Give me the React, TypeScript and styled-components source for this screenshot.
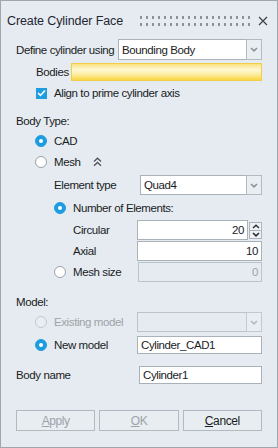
import React from 'react';
import styled, { createGlobalStyle } from 'styled-components';

const GlobalStyle = createGlobalStyle`
    body {
        margin: 0;
        font-family: "Liberation Sans", Arial, sans-serif;
        background: #e5ebf0;
    }
`;

const Dialog = styled.div`
    width: 278px;
    height: 448px;
    box-sizing: border-box;
    border: 1px solid #9ea6ae;
    background: #e5ebf0;
    display: flex;
    flex-direction: column;
    color: #1a1c24;
    font-size: 11.5px;
    letter-spacing: -0.4px;
`;

const TitleBar = styled.div`
    height: 36px;
    box-sizing: border-box;
    padding: 3px 9px 0 6px;
    display: flex;
    align-items: center;
`;

const Title = styled.span`
    font-size: 12.5px;
    letter-spacing: -0.1px;
    color: #1f2633;
    flex: none;
`;

const Grip = styled.div`
    flex: 1;
    height: 14px;
    margin: 0 6px 0 15px;
    background-image: radial-gradient(circle, #899098 1.1px, transparent 1.5px);
    background-size: 6px 7px;
`;

const Content = styled.div`
    padding: 0 15px;
    display: flex;
    flex-direction: column;
`;

const Row = styled.div<{ $h: number; $mt: number; $indent?: number }>`
    display: flex;
    align-items: center;
    height: ${({ $h }) => $h}px;
    margin-top: ${({ $mt }) => $mt}px;
    padding-left: ${({ $indent }) => $indent || 0}px;
    white-space: nowrap;
`;

const Label = styled.span<{ $w?: number; $disabled?: boolean }>`
    flex: none;
    width: ${({ $w }) => ($w ? `${$w}px` : 'auto')};
    color: ${({ $disabled }) => ($disabled ? '#9da3a9' : 'inherit')};
`;

const Combo = styled.div`
    flex: 1;
    height: 100%;
    display: flex;
`;

const ComboField = styled.div<{ $disabled?: boolean }>`
    flex: 1;
    box-sizing: border-box;
    border: 1px solid ${({ $disabled }) => ($disabled ? '#bcc3c9' : '#a9b1b9')};
    background: ${({ $disabled }) => ($disabled ? '#e5ebf0' : '#ffffff')};
    padding-left: 3px;
    display: flex;
    align-items: center;
`;

const ComboArrow = styled.div<{ $disabled?: boolean }>`
    width: 16px;
    box-sizing: border-box;
    border: 1px solid ${({ $disabled }) => ($disabled ? '#c3c9cf' : '#b3bac1')};
    margin-left: -1px;
    background: #e9eef2;
    display: flex;
    align-items: center;
    justify-content: center;
`;

const Field = styled.div<{ $align?: string; $disabled?: boolean; $yellow?: boolean }>`
    flex: 1;
    height: 100%;
    box-sizing: border-box;
    border: 1px solid ${({ $disabled, $yellow }) => ($yellow ? '#efcf4a' : $disabled ? '#bcc3c9' : '#a9b1b9')};
    background: ${({ $disabled, $yellow }) =>
        $yellow
            ? 'linear-gradient(#fbe27e, #fff7d4 35%, #feeda0 65%, #f9d640)'
            : $disabled
            ? '#e5ebf0'
            : '#ffffff'};
    color: ${({ $disabled }) => ($disabled ? '#9da3a9' : 'inherit')};
    padding: 0 3px;
    display: flex;
    align-items: center;
    justify-content: ${({ $align }) => ($align === 'right' ? 'flex-end' : 'flex-start')};
`;

const Spinner = styled.div`
    width: 14px;
    height: 100%;
    display: flex;
    flex-direction: column;
    justify-content: center;
    padding-left: 1px;
    box-sizing: border-box;
`;

const SpinButton = styled.div`
    height: 9px;
    box-sizing: border-box;
    border: 1px solid #adb4bb;
    background: #eef2f5;
    display: flex;
    align-items: center;
    justify-content: center;
    & + & {
        margin-top: -1px;
    }
`;

const Option = styled.label<{ $w?: number; $disabled?: boolean }>`
    flex: none;
    width: ${({ $w }) => ($w ? `${$w}px` : 'auto')};
    display: flex;
    align-items: center;
    gap: 7px;
    color: ${({ $disabled }) => ($disabled ? '#9da3a9' : 'inherit')};
`;

const Radio = styled.span<{ $checked?: boolean; $disabled?: boolean }>`
    width: 12px;
    height: 12px;
    box-sizing: border-box;
    border-radius: 50%;
    flex: none;
    border: 1px solid ${({ $checked, $disabled }) => ($checked ? '#1d9de0' : $disabled ? '#c2c8ce' : '#9aa1a8')};
    background: ${({ $checked, $disabled }) => ($checked ? '#1d9de0' : $disabled ? '#e9eef2' : '#ffffff')};
    display: flex;
    align-items: center;
    justify-content: center;
    &::after {
        content: '';
        width: 4px;
        height: 4px;
        border-radius: 50%;
        background: #ffffff;
        display: ${({ $checked }) => ($checked ? 'block' : 'none')};
    }
`;

const Check = styled.span`
    width: 11px;
    height: 11px;
    flex: none;
    background: #1d9de0;
    display: flex;
    align-items: center;
    justify-content: center;
`;

const Expand = styled.span`
    margin-left: 12px;
    display: flex;
    align-items: center;
`;

const ButtonBar = styled.div`
    display: flex;
    gap: 4px;
    height: 21px;
    margin-top: 26px;
`;

const Button = styled.div<{ $disabled?: boolean }>`
    flex: 1;
    box-sizing: border-box;
    border: 1px solid #b2b9c0;
    background: #e7edf1;
    color: ${({ $disabled }) => ($disabled ? '#9da3a9' : '#1a1c24')};
    display: flex;
    align-items: center;
    justify-content: center;
    font-size: 12px;
`;

const DownArrow = ({ color = '#8b9299' }: { color?: string }) => (
    <svg width="8" height="5" viewBox="0 0 8 5">
        <path d="M1 1 L4 3.8 L7 1" fill="none" stroke={color} strokeWidth="1.6" />
    </svg>
);

const UpArrow = ({ color = '#2a2d33' }: { color?: string }) => (
    <svg width="8" height="5" viewBox="0 0 8 5">
        <path d="M1 4 L4 1.2 L7 4" fill="none" stroke={color} strokeWidth="1.4" />
    </svg>
);

const Combobox = ({ value, disabled }: { value?: string; disabled?: boolean }) => (
    <Combo>
        <ComboField $disabled={disabled}>{value}</ComboField>
        <ComboArrow $disabled={disabled}>
            <DownArrow color={disabled ? '#b4bac0' : '#8b9299'} />
        </ComboArrow>
    </Combo>
);

const App: React.FC = () => {
    return (
        <>
            <GlobalStyle />
            <Dialog>
                <TitleBar>
                    <Title>Create Cylinder Face</Title>
                    <Grip />
                    <svg width="10" height="10" viewBox="0 0 10 10">
                        <path d="M1 1 L9 9 M9 1 L1 9" stroke="#3d424a" strokeWidth="1.2" />
                    </svg>
                </TitleBar>
                <Content>
                    <Row $h={21} $mt={2}>
                        <Label $w={102}>Define cylinder using</Label>
                        <Combobox value="Bounding Body" />
                    </Row>
                    <Row $h={18} $mt={3} $indent={20}>
                        <Label $w={35}>Bodies</Label>
                        <Field $yellow />
                    </Row>
                    <Row $h={16} $mt={4} $indent={20}>
                        <Option>
                            <Check>
                                <svg width="9" height="8" viewBox="0 0 9 8">
                                    <path d="M1 4 L3.5 6.3 L8 1.5" fill="none" stroke="#ffffff" strokeWidth="1.6" />
                                </svg>
                            </Check>
                            Align to prime cylinder axis
                        </Option>
                    </Row>

                    <Row $h={16} $mt={12}>
                        <Label>Body Type:</Label>
                    </Row>
                    <Row $h={16} $mt={4} $indent={19}>
                        <Option>
                            <Radio $checked />
                            CAD
                        </Option>
                    </Row>
                    <Row $h={16} $mt={5} $indent={19}>
                        <Option>
                            <Radio />
                            Mesh
                        </Option>
                        <Expand>
                            <svg width="9" height="10" viewBox="0 0 9 10">
                                <path d="M1 4.5 L4.5 1.2 L8 4.5 M1 8.8 L4.5 5.5 L8 8.8" fill="none" stroke="#50555c" strokeWidth="1.3" />
                            </svg>
                        </Expand>
                    </Row>
                    <Row $h={20} $mt={5} $indent={38}>
                        <Label $w={86}>Element type</Label>
                        <Combobox value="Quad4" />
                    </Row>
                    <Row $h={16} $mt={5} $indent={38}>
                        <Option>
                            <Radio $checked />
                            Number of Elements:
                        </Option>
                    </Row>
                    <Row $h={20} $mt={4} $indent={57}>
                        <Label $w={64}>Circular</Label>
                        <Field $align="right">20</Field>
                        <Spinner>
                            <SpinButton>
                                <UpArrow />
                            </SpinButton>
                            <SpinButton>
                                <DownArrow color="#2a2d33" />
                            </SpinButton>
                        </Spinner>
                    </Row>
                    <Row $h={20} $mt={1} $indent={57}>
                        <Label $w={64}>Axial</Label>
                        <Field $align="right">10</Field>
                    </Row>
                    <Row $h={20} $mt={1} $indent={38}>
                        <Option $w={84}>
                            <Radio />
                            Mesh size
                        </Option>
                        <Field $align="right" $disabled>
                            0
                        </Field>
                    </Row>

                    <Row $h={16} $mt={12}>
                        <Label>Model:</Label>
                    </Row>
                    <Row $h={20} $mt={2} $indent={19}>
                        <Option $w={102} $disabled>
                            <Radio $disabled />
                            Existing model
                        </Option>
                        <Combobox disabled />
                    </Row>
                    <Row $h={18} $mt={4} $indent={19}>
                        <Option $w={102}>
                            <Radio $checked />
                            New model
                        </Option>
                        <Field>Cylinder_CAD1</Field>
                    </Row>
                    <Row $h={18} $mt={12}>
                        <Label $w={123}>Body name</Label>
                        <Field>Cylinder1</Field>
                    </Row>

                    <ButtonBar>
                        <Button $disabled>
                            <span>
                                <u>A</u>pply
                            </span>
                        </Button>
                        <Button $disabled>
                            <span>
                                <u>O</u>K
                            </span>
                        </Button>
                        <Button>
                            <span>
                                <u>C</u>ancel
                            </span>
                        </Button>
                    </ButtonBar>
                </Content>
            </Dialog>
        </>
    );
};

export default App;
